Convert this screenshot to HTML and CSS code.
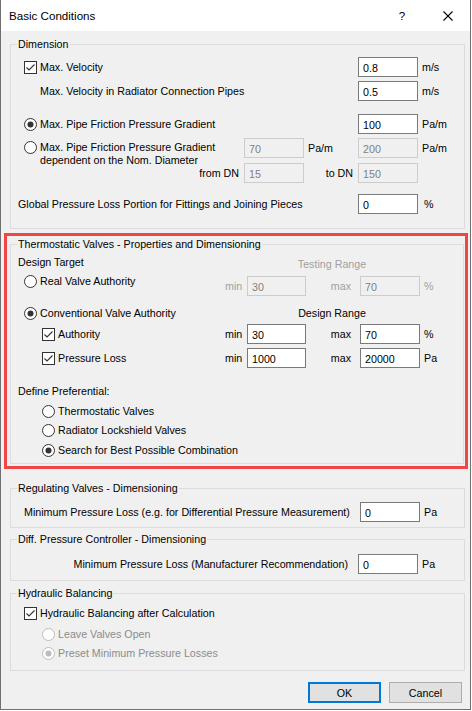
FILE: index.html
```html
<!DOCTYPE html>
<html lang="en">
<head>
<meta charset="utf-8">
<title>Basic Conditions</title>
<link rel="stylesheet" href="styles.css">
</head>
<body>
<div class="window">
  <div class="titlebar">
    <span class="title">Basic Conditions</span>
    <span class="help">?</span>
    <span class="close"><svg width="10" height="10" viewBox="0 0 10 10"><path d="M0.5 0.5 L9.5 9.5 M9.5 0.5 L0.5 9.5" stroke="#000" stroke-width="1.1" fill="none"/></svg></span>
  </div>
  <div class="content">
    <fieldset class="group g-dim">
      <legend>Dimension</legend>
      <div class="row mt5">
        <label class="opt fill ml7"><svg class="box" width="13" height="13" viewBox="0 0 13 13"><rect x="0.5" y="0.5" width="12" height="12" fill="#fff" stroke="#333"/><path d="M2.5 6.5 L5 9 L10.5 3.5" fill="none" stroke="#333" stroke-width="1.1"/></svg><span>Max. Velocity</span></label>
        <div class="edit">0.8</div>
        <span class="unit u46">m/s</span>
      </div>
      <div class="row mt4">
        <span class="fill ml23">Max. Velocity in Radiator Connection Pipes</span>
        <div class="edit">0.5</div>
        <span class="unit u46">m/s</span>
      </div>
      <div class="row mt13">
        <label class="opt fill ml7"><svg class="box" width="13" height="13" viewBox="0 0 13 13"><circle cx="6.5" cy="6.5" r="6" fill="#fff" stroke="#333"/><circle cx="6.5" cy="6.5" r="3" fill="#333"/></svg><span>Max. Pipe Friction Pressure Gradient</span></label>
        <div class="edit">100</div>
        <span class="unit u46">Pa/m</span>
      </div>
      <div class="row mt4">
        <label class="opt multi fill ml7"><svg class="box" width="13" height="13" viewBox="0 0 13 13"><circle cx="6.5" cy="6.5" r="6" fill="#fff" stroke="#333"/></svg><span>Max. Pipe Friction Pressure Gradient<br>dependent on the Nom. Diameter</span></label>
        <div class="edit disabled">70</div>
        <span class="unit u54">Pa/m</span>
        <div class="edit disabled">200</div>
        <span class="unit u46">Pa/m</span>
      </div>
      <div class="row mt5">
        <span class="fill right pr5">from DN</span>
        <div class="edit disabled">15</div>
        <span class="unit u54 right pr5">to DN</span>
        <div class="edit disabled">150</div>
        <span class="unit u46"></span>
      </div>
      <div class="row mt11">
        <span class="fill ml1">Global Pressure Loss Portion for Fittings and Joining Pieces</span>
        <div class="edit">0</div>
        <span class="unit u46 pct">%</span>
      </div>
    </fieldset>

    <div class="highlight">
      <fieldset class="group g-thermo">
        <legend>Thermostatic Valves - Properties and Dimensioning</legend>
        <div class="row small mt3">
          <span class="fill ml1">Design Target</span>
          <span class="range-title disabled-text">Testing Range</span>
        </div>
        <div class="row mt7">
          <label class="opt fill ml7 lift"><svg class="box" width="13" height="13" viewBox="0 0 13 13"><circle cx="6.5" cy="6.5" r="6" fill="#fff" stroke="#333"/></svg><span>Real Valve Authority</span></label>
          <span class="minlbl disabled-text">min</span>
          <div class="edit w59 disabled">30</div>
          <span class="maxlbl disabled-text">max</span>
          <div class="edit disabled">70</div>
          <span class="unit u43 disabled-text">%</span>
        </div>
        <div class="row small mt10">
          <label class="opt fill ml7"><svg class="box" width="13" height="13" viewBox="0 0 13 13"><circle cx="6.5" cy="6.5" r="6" fill="#fff" stroke="#333"/><circle cx="6.5" cy="6.5" r="3" fill="#333"/></svg><span>Conventional Valve Authority</span></label>
          <span class="range-title design">Design Range</span>
        </div>
        <div class="row mt4">
          <label class="opt fill ml25"><svg class="box" width="13" height="13" viewBox="0 0 13 13"><rect x="0.5" y="0.5" width="12" height="12" fill="#fff" stroke="#333"/><path d="M2.5 6.5 L5 9 L10.5 3.5" fill="none" stroke="#333" stroke-width="1.1"/></svg><span>Authority</span></label>
          <span class="minlbl">min</span>
          <div class="edit w59">30</div>
          <span class="maxlbl">max</span>
          <div class="edit">70</div>
          <span class="unit u43">%</span>
        </div>
        <div class="row mt4">
          <label class="opt fill ml25"><svg class="box" width="13" height="13" viewBox="0 0 13 13"><rect x="0.5" y="0.5" width="12" height="12" fill="#fff" stroke="#333"/><path d="M2.5 6.5 L5 9 L10.5 3.5" fill="none" stroke="#333" stroke-width="1.1"/></svg><span>Pressure Loss</span></label>
          <span class="minlbl">min</span>
          <div class="edit w59">1000</div>
          <span class="maxlbl">max</span>
          <div class="edit">20000</div>
          <span class="unit u43">Pa</span>
        </div>
        <div class="row small mt16">
          <span class="fill ml1">Define Preferential:</span>
        </div>
        <div class="row small mt6">
          <label class="opt ml25"><svg class="box" width="13" height="13" viewBox="0 0 13 13"><circle cx="6.5" cy="6.5" r="6" fill="#fff" stroke="#333"/></svg><span>Thermostatic Valves</span></label>
        </div>
        <div class="row small mt5">
          <label class="opt ml25"><svg class="box" width="13" height="13" viewBox="0 0 13 13"><circle cx="6.5" cy="6.5" r="6" fill="#fff" stroke="#333"/></svg><span>Radiator Lockshield Valves</span></label>
        </div>
        <div class="row small mt6">
          <label class="opt ml25"><svg class="box" width="13" height="13" viewBox="0 0 13 13"><circle cx="6.5" cy="6.5" r="6" fill="#fff" stroke="#333"/><circle cx="6.5" cy="6.5" r="3" fill="#333"/></svg><span>Search for Best Possible Combination</span></label>
        </div>
      </fieldset>
    </div>

    <fieldset class="group g-reg">
      <legend>Regulating Valves - Dimensioning</legend>
      <div class="row mt6">
        <span class="fill ml7">Minimum Pressure Loss (e.g. for Differential Pressure Measurement)</span>
        <div class="edit">0</div>
        <span class="unit u44">Pa</span>
      </div>
    </fieldset>

    <fieldset class="group g-diff">
      <legend>Diff. Pressure Controller - Dimensioning</legend>
      <div class="row mt7">
        <span class="fill right pr10">Minimum Pressure Loss (Manufacturer Recommendation)</span>
        <div class="edit">0</div>
        <span class="unit u46">Pa</span>
      </div>
    </fieldset>

    <fieldset class="group g-hyd">
      <legend>Hydraulic Balancing</legend>
      <div class="row small mt5">
        <label class="opt ml7"><svg class="box" width="13" height="13" viewBox="0 0 13 13"><rect x="0.5" y="0.5" width="12" height="12" fill="#fff" stroke="#333"/><path d="M2.5 6.5 L5 9 L10.5 3.5" fill="none" stroke="#333" stroke-width="1.1"/></svg><span>Hydraulic Balancing after Calculation</span></label>
      </div>
      <div class="row small mt7">
        <label class="opt ml25 off"><svg class="box" width="13" height="13" viewBox="0 0 13 13"><circle cx="6.5" cy="6.5" r="6" fill="#fff" stroke="#bcbcbc"/></svg><span>Leave Valves Open</span></label>
      </div>
      <div class="row small mt5">
        <label class="opt ml25 off"><svg class="box" width="13" height="13" viewBox="0 0 13 13"><circle cx="6.5" cy="6.5" r="6" fill="#fff" stroke="#bcbcbc"/><circle cx="6.5" cy="6.5" r="3" fill="#bcbcbc"/></svg><span>Preset Minimum Pressure Losses</span></label>
      </div>
    </fieldset>

    <div class="buttons">
      <div class="btn default">OK</div>
      <div class="btn">Cancel</div>
    </div>
  </div>
</div>
</body>
</html>
```

FILE: styles.css
```css
html, body {
  margin: 0;
  padding: 0;
  background: #ffffff;
}
body {
  font-family: "Liberation Sans", Arial, sans-serif;
  font-size: 10.7px;
  line-height: 14px;
  color: #000;
}
.window {
  width: 471px;
  height: 710px;
  box-sizing: border-box;
  border: 1px solid #707070;
  border-top: none;
  background: #f0f0f0;
  display: flex;
  flex-direction: column;
}
.titlebar {
  height: 31px;
  flex: none;
  background: #fff;
  display: flex;
  align-items: center;
}
.title {
  margin-left: 8px;
  font-size: 11.6px;
}
.help {
  margin-left: auto;
  width: 48px;
  text-align: center;
  font-size: 11.6px;
}
.close {
  width: 44px;
  display: flex;
  justify-content: center;
  align-items: center;
}
.close svg { display: block; }
.content {
  flex: 1;
  display: flex;
  flex-direction: column;
  padding: 0 0 0 3px;
}
fieldset.group {
  margin: 0 5px 0 6px;
  border: 1px solid #dcdcdc;
  padding: 0 0 0 6px;
  min-width: 0;
}
fieldset.group legend {
  padding: 0 1px;
  line-height: 15px;
}
.g-dim { margin-top: 6px !important; padding-bottom: 14px !important; }
.highlight {
  margin: 4px 2px 0 0;
  border: 3px solid #f04646;
}
.highlight fieldset.g-thermo {
  margin: 1px 1px 2px 3px;
  padding-bottom: 6px;
}
.g-reg { margin-top: 12px !important; padding-bottom: 5px !important; }
.g-diff { margin-top: 4px !important; padding-bottom: 6px !important; }
.g-hyd { margin-top: 5px !important; padding-bottom: 10px !important; }

.row {
  display: flex;
  align-items: center;
  height: 20px;
}
.row.small {
  height: 14px;
  align-items: flex-start;
}
.mt3 { margin-top: 3px; }
.mt4 { margin-top: 4px; }
.mt5 { margin-top: 5px; }
.mt6 { margin-top: 6px; }
.mt7 { margin-top: 7px; }
.mt10 { margin-top: 10px; }
.mt11 { margin-top: 11px; }
.mt13 { margin-top: 13px; }
.mt16 { margin-top: 16px; }
.ml1 { margin-left: 1px; }
.ml7 { margin-left: 7px; }
.ml23 { margin-left: 23px; }
.ml25 { margin-left: 25px; }
.fill { flex: 1; min-width: 0; white-space: nowrap; }
.right { text-align: right; }
.pr5 { padding-right: 5px; }
.pr10 { padding-right: 10px; }

.opt {
  display: flex;
  align-items: center;
  white-space: nowrap;
}
.opt .box {
  flex: none;
  display: block;
  margin-right: 3px;
}
.opt.multi {
  align-self: flex-start;
  align-items: flex-start;
  line-height: 13px;
  padding-top: 3px;
}
.opt.lift {
  align-self: flex-start;
  margin-top: -2px;
}
.opt.off { color: #8c8c8c; }

.edit {
  flex: none;
  box-sizing: border-box;
  width: 60px;
  height: 20px;
  border: 1px solid #7a7a7a;
  background: #fff;
  padding: 1px 4px 0;
  display: flex;
  align-items: center;
  white-space: nowrap;
}
.edit.w59 { width: 59px; }
.edit.disabled {
  border-color: #cccccc;
  background: #f0f0f0;
  color: #808080;
}
.unit {
  flex: none;
  box-sizing: border-box;
  padding-left: 4px;
  white-space: nowrap;
}
.u43 { width: 43px; }
.u44 { width: 44px; }
.u46 { width: 46px; }
.u54 { width: 54px; }
.unit.pct { padding-left: 6px; }
.unit.right { padding-left: 0; }

.minlbl {
  flex: none;
  width: 22px;
  box-sizing: border-box;
  padding-right: 5px;
  text-align: right;
}
.maxlbl {
  flex: none;
  width: 54px;
  box-sizing: border-box;
  padding-right: 9px;
  text-align: right;
}
.range-title {
  flex: none;
  width: 170px;
  margin-right: 46px;
  text-align: center;
  margin-top: 2px;
}
.range-title.design { margin-top: 0; }
.disabled-text { color: #a0a0a0; }

.buttons {
  margin-top: 11px;
  display: flex;
  justify-content: flex-end;
  gap: 8px;
  padding-right: 8px;
}
.btn {
  box-sizing: border-box;
  width: 73px;
  height: 21px;
  border: 1px solid #adadad;
  background: #e1e1e1;
  display: flex;
  align-items: center;
  justify-content: center;
}
.btn.default {
  border: 2px solid #0078d7;
}
```
